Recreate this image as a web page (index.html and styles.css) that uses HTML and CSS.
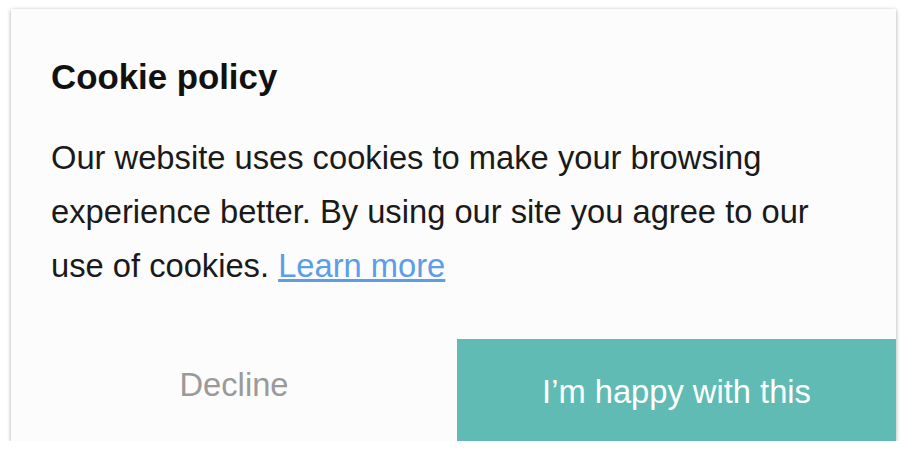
FILE: index.html
```html
<!DOCTYPE html>
<html lang="en">
<head>
  <meta charset="UTF-8">
  <title>Cookie policy</title>
  <link rel="stylesheet" href="styles.css">
</head>
<body>

  <div class="cookie-card">
    <div class="cookie-texto">
      <h2>Cookie policy</h2>
      <p>Our website uses cookies to make your browsing experience better. By using our site you agree to our use of cookies. <a href="#">Learn more</a></p>
    </div>

    <div class="cookie-botones">
      <button class="btn-decline">Decline</button>
      <button class="btn-accept">I’m happy with this</button>
    </div>
  </div>

</body>
</html>
```

FILE: styles.css
```css
* {
  box-sizing: border-box;
}

body {
  margin: 0;
  padding: 9px 0 0 11px;
  background: #fff;
  font-family: 'Liberation Sans', Arial, sans-serif;
}

.cookie-card {
  width: 885px;
  background: #fcfcfc;
  box-shadow: 0 1px 4px rgba(0, 0, 0, 0.35);
  display: flex;
  flex-direction: column;
}

.cookie-texto {
  padding: 48px 60px 46px 40px;
}

.cookie-texto h2 {
  margin: 0 0 34px 0;
  font-size: 34.8px;
  font-weight: bold;
  color: #111;
}

.cookie-texto p {
  margin: 0;
  font-size: 32.7px;
  line-height: 54px;
  color: #1a1a1a;
}

.cookie-texto a {
  color: #5b9de8;
  text-decoration: underline;
}

.cookie-botones {
  display: grid;
  grid-template-columns: 446px 1fr;
  height: 102px;
}

.cookie-botones button {
  border: none;
  font-family: inherit;
  font-size: 32.7px;
  cursor: pointer;
}

.btn-decline {
  background: transparent;
  color: #9a9a9a;
  padding: 0 0 10px 0;
}

.btn-accept {
  background: #5fbbb3;
  color: #fff;
  padding: 3px 0 0 0;
}
```
